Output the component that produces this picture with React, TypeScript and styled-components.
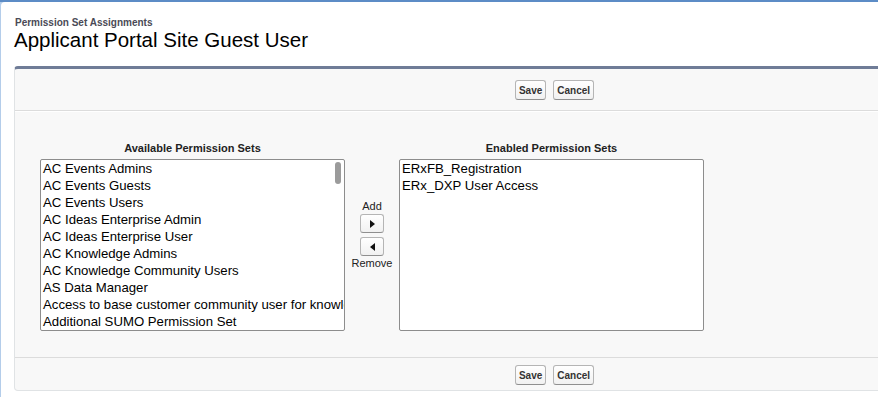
import React from "react";
import styled, { createGlobalStyle } from "styled-components";

const GlobalStyle = createGlobalStyle`
  html, body {
    margin: 0;
    padding: 0;
    overflow: hidden;
  }
  body {
    font-family: "Liberation Sans", Arial, sans-serif;
    color: #000;
  }
`;

const Page = styled.div`
  min-height: 100vh;
  padding: 2px 0 0 1px;
  box-sizing: border-box;
  background: linear-gradient(#5c8cc6 0 2px, #b4cdea 2px);
`;

const Card = styled.div`
  min-height: calc(100vh - 2px);
  background: #fff;
  border-top-left-radius: 4px;
  padding: 15px 0 0 13px;
  box-sizing: border-box;
`;

const SubTitle = styled.div`
  font-size: 10px;
  line-height: 12px;
  font-weight: bold;
  color: #4a4a56;
  padding-left: 1px;
`;

const Title = styled.h1`
  margin: 0 0 15px;
  font-size: 20.5px;
  line-height: 22px;
  font-weight: normal;
  color: #000;
`;

const Panel = styled.div`
  width: 1081px;
  box-sizing: border-box;
  background: #f8f8f8;
  border: 1px solid #e0e3e5;
  border-top: 3px solid #6f7c97;
  border-radius: 4px;
`;

const ButtonRow = styled.div<{ $top: number; $bottom: number; $last?: boolean }>`
  display: flex;
  justify-content: center;
  gap: 7px;
  padding: ${(p) => p.$top}px 0 ${(p) => p.$bottom}px;
  border-bottom: ${(p) => (p.$last ? "none" : "1px solid #dcdcdc")};
  border-top: ${(p) => (p.$last ? "1px solid #dcdcdc" : "none")};
`;

const Button = styled.button`
  height: 20px;
  padding: 0 3px;
  font-family: "Liberation Sans", Arial, sans-serif;
  font-size: 10px;
  font-weight: bold;
  color: #333;
  background: linear-gradient(#ffffff, #f1f1f1);
  border: 1px solid #b5b5b5;
  border-bottom-color: #8f8f8f;
  border-radius: 3px;
  cursor: pointer;
`;

const Body = styled.div`
  display: flex;
  align-items: flex-start;
  padding: 29px 0 26px 25px;
  border-top: 1px solid #fff;
`;

const Column = styled.div`
  display: flex;
  flex-direction: column;
  align-items: center;
  width: 305px;
`;

const ColumnLabel = styled.div`
  font-size: 11px;
  line-height: 14px;
  font-weight: bold;
  color: #222;
  margin-bottom: 4px;
`;

const ListBox = styled.div`
  position: relative;
  width: 305px;
  height: 172px;
  box-sizing: border-box;
  background: #fff;
  border: 1px solid #8d8d8d;
  border-radius: 2px;
  overflow: hidden;
`;

const ListItem = styled.div`
  font-size: 13.2px;
  line-height: 17px;
  padding-left: 2px;
  white-space: nowrap;
  overflow: hidden;
`;

const ScrollThumb = styled.div`
  position: absolute;
  top: 2px;
  right: 3px;
  width: 6px;
  height: 22px;
  border-radius: 3px;
  background: #9b9b9b;
`;

const Mover = styled.div`
  width: 54px;
  display: flex;
  flex-direction: column;
  align-items: center;
  padding-top: 58px;
`;

const MoverLabel = styled.div<{ $below?: number }>`
  font-size: 11px;
  line-height: 14px;
  color: #222;
  margin-bottom: ${(p) => p.$below ?? 0}px;
`;

const ArrowButton = styled.button<{ $below?: number }>`
  width: 24px;
  height: 19px;
  padding: 0;
  margin-bottom: ${(p) => p.$below ?? 0}px;
  display: flex;
  align-items: center;
  justify-content: center;
  background: linear-gradient(#ffffff, #f1f1f1);
  border: 1px solid #b5b5b5;
  border-bottom-color: #8f8f8f;
  border-radius: 3px;
`;

const Arrow = ({ dir }: { dir: "left" | "right" }) => (
  <svg width="5" height="8" viewBox="0 0 5 8">
    {dir === "right" ? (
      <polygon points="0,0 5,4 0,8" fill="#111" />
    ) : (
      <polygon points="5,0 0,4 5,8" fill="#111" />
    )}
  </svg>
);

const available = [
  "AC Events Admins",
  "AC Events Guests",
  "AC Events Users",
  "AC Ideas Enterprise Admin",
  "AC Ideas Enterprise User",
  "AC Knowledge Admins",
  "AC Knowledge Community Users",
  "AS Data Manager",
  "Access to base customer community user for knowledge",
  "Additional SUMO Permission Set",
];

const enabled = ["ERxFB_Registration", "ERx_DXP User Access"];

const Actions = ({ top, bottom, last }: { top: number; bottom: number; last?: boolean }) => (
  <ButtonRow $top={top} $bottom={bottom} $last={last}>
    <Button>Save</Button>
    <Button>Cancel</Button>
  </ButtonRow>
);

export default function App() {
  return (
    <Page>
      <GlobalStyle />
      <Card>
        <SubTitle>Permission Set Assignments</SubTitle>
        <Title>Applicant Portal Site Guest User</Title>
        <Panel>
          <Actions top={11} bottom={10} />
          <Body>
            <Column>
              <ColumnLabel>Available Permission Sets</ColumnLabel>
              <ListBox>
                {available.map((item) => (
                  <ListItem key={item}>{item}</ListItem>
                ))}
                <ScrollThumb />
              </ListBox>
            </Column>
            <Mover>
              <MoverLabel $below={1}>Add</MoverLabel>
              <ArrowButton $below={4}>
                <Arrow dir="right" />
              </ArrowButton>
              <ArrowButton>
                <Arrow dir="left" />
              </ArrowButton>
              <MoverLabel>Remove</MoverLabel>
            </Mover>
            <Column>
              <ColumnLabel>Enabled Permission Sets</ColumnLabel>
              <ListBox>
                {enabled.map((item) => (
                  <ListItem key={item}>{item}</ListItem>
                ))}
              </ListBox>
            </Column>
          </Body>
          <Actions top={7} bottom={5} last />
        </Panel>
      </Card>
    </Page>
  );
}
